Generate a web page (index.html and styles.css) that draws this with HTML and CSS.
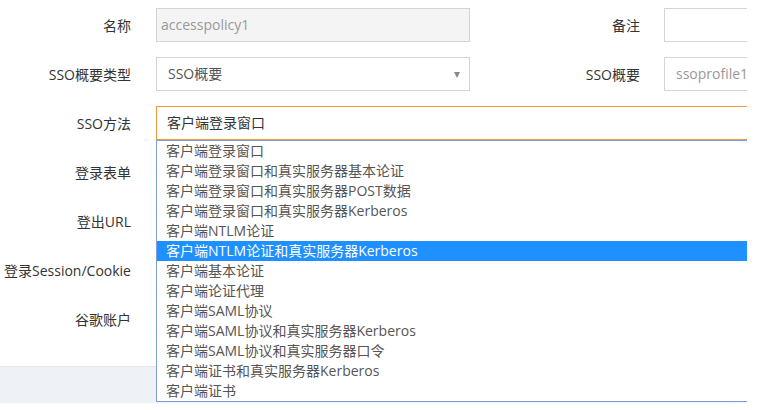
FILE: index.html
```html
<!DOCTYPE html>
<html lang="zh">
<head>
<meta charset="utf-8">
<title>SSO</title>
<link rel="stylesheet" href="styles.css">
</head>
<body>
<div class="frame">
  <div class="form">
    <div class="row">
      <div class="label">名称</div>
      <div class="field disabled">accesspolicy1</div>
      <div class="label label2">备注</div>
      <div class="field field2"></div>
    </div>
    <div class="row">
      <div class="label">SSO概要类型</div>
      <div class="field select">SSO概要<span class="arrow"></span></div>
      <div class="label label2">SSO概要</div>
      <div class="field field2 muted">ssoprofile1</div>
    </div>
    <div class="row">
      <div class="label">SSO方法</div>
      <div class="field wide focus">客户端登录窗口</div>
    </div>
    <div class="row">
      <div class="label">登录表单</div>
      <div class="field"></div>
    </div>
    <div class="row">
      <div class="label">登出URL</div>
      <div class="field"></div>
    </div>
    <div class="row">
      <div class="label">登录Session/Cookie</div>
      <div class="field"></div>
    </div>
    <div class="row">
      <div class="label">谷歌账户</div>
      <div class="field"></div>
    </div>
  </div>
  <div class="footer"></div>
  <ul class="list">
    <li>客户端登录窗口</li>
    <li>客户端登录窗口和真实服务器基本论证</li>
    <li>客户端登录窗口和真实服务器POST数据</li>
    <li>客户端登录窗口和真实服务器Kerberos</li>
    <li>客户端NTLM论证</li>
    <li class="active">客户端NTLM论证和真实服务器Kerberos</li>
    <li>客户端基本论证</li>
    <li>客户端论证代理</li>
    <li>客户端SAML协议</li>
    <li>客户端SAML协议和真实服务器Kerberos</li>
    <li>客户端SAML协议和真实服务器口令</li>
    <li>客户端证书和真实服务器Kerberos</li>
    <li>客户端证书</li>
  </ul>
</div>
</body>
</html>
```

FILE: styles.css
```css
* { box-sizing: border-box; }
html, body { margin: 0; padding: 0; background: #fff; }
body {
  font-family: "Open Sans", "Noto Sans CJK SC", sans-serif;
  font-size: 14px;
  color: #333;
}
.frame {
  position: relative;
  width: 747px;
  height: 410px;
  overflow: hidden;
}
.form {
  display: flex;
  flex-direction: column;
  gap: 15px;
  padding-top: 8px;
}
.row {
  display: flex;
  align-items: center;
  height: 34px;
}
.label {
  flex: none;
  width: 131px;
  margin-right: 25px;
  text-align: right;
  white-space: nowrap;
  color: #333;
}
.label2 {
  width: 170px;
  margin-right: 24px;
}
.field {
  flex: none;
  position: relative;
  width: 314px;
  height: 34px;
  border: 1px solid #d4d4d4;
  background: #fff;
  padding: 0 11px;
  line-height: 32px;
  white-space: nowrap;
  color: #555;
}
.field.disabled {
  background: #f4f4f4;
  color: #999;
  padding-left: 4px;
}
.field.muted { color: #999; padding-left: 11px; }
.field2 { width: 200px; }
.field.wide {
  width: 700px;
  border-color: #f39a3a;
  padding-left: 10px;
  color: #333;
}
.select .arrow {
  position: absolute;
  right: 9px;
  top: 14px;
  width: 0;
  height: 0;
  border-left: 3.5px solid transparent;
  border-right: 3.5px solid transparent;
  border-top: 6px solid #888;
}
.footer {
  margin-top: 30px;
  height: 37px;
  background: #eef1f6;
  border-top: 1px solid #e3e7ed;
}
.list {
  position: absolute;
  left: 156px;
  top: 140px;
  width: 700px;
  margin: 0;
  padding: 0;
  list-style: none;
  background: #fff;
  border: 1px solid #7f9ed9;
}
.list li {
  height: 20px;
  line-height: 20px;
  padding-left: 9px;
  color: #555;
  white-space: nowrap;
}
.list li.active {
  background: #1e90ff;
  color: #fff;
}
```
